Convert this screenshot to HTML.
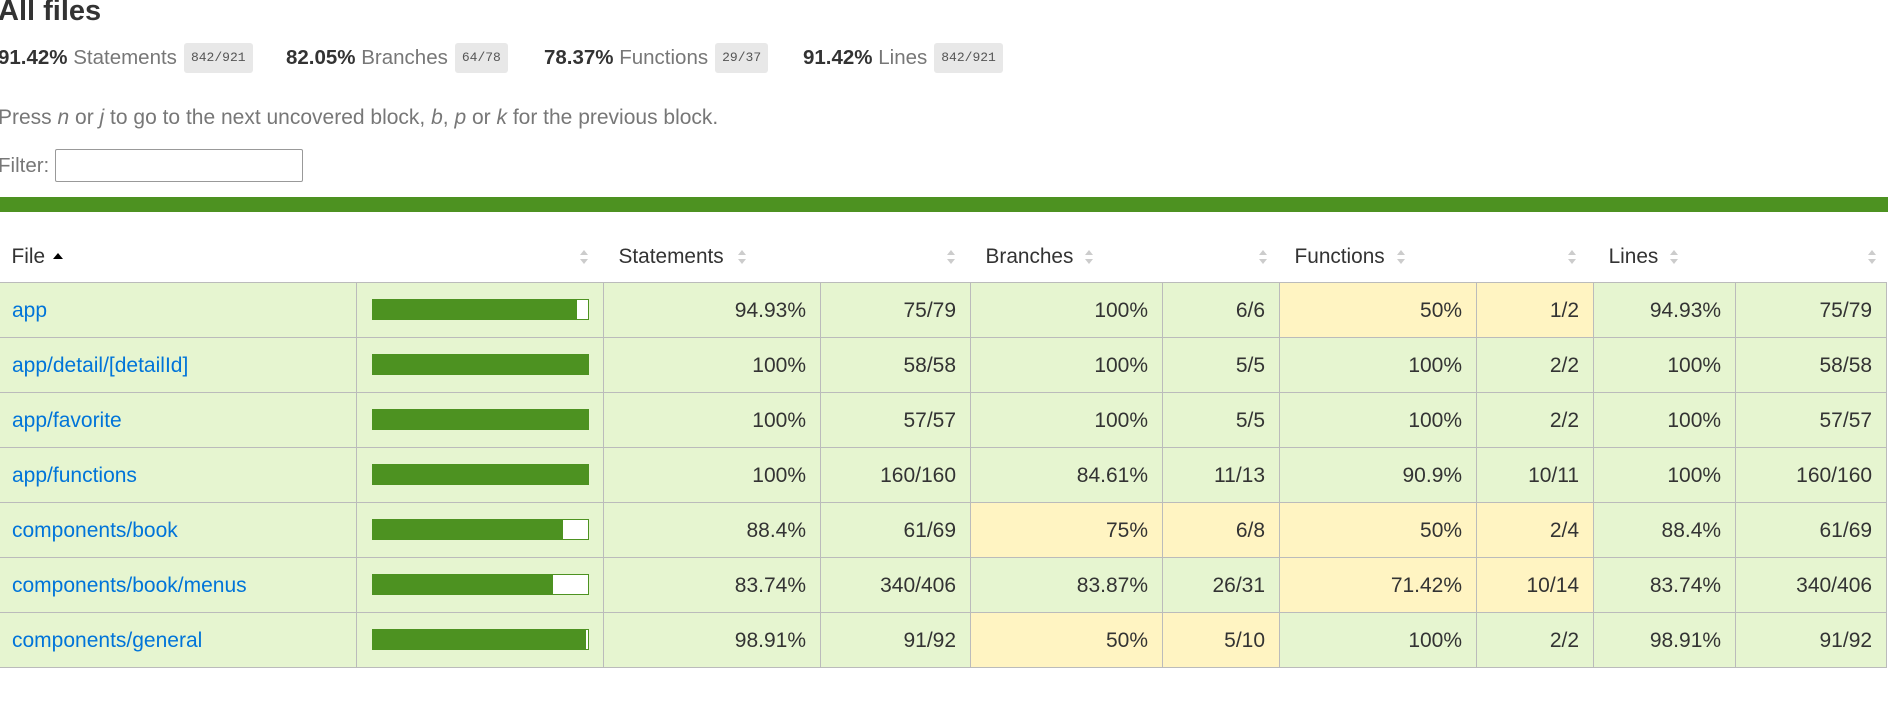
<!DOCTYPE html>
<html><head><meta charset="utf-8"><style>
*{box-sizing:border-box}
body{margin:0;width:1888px;height:704px;overflow:hidden;background:#fff;font-family:"Liberation Sans",Arial,sans-serif;font-size:20.5px;color:#333}
h1{position:absolute;left:-2px;top:-6px;margin:0;font-size:29px;font-weight:bold;line-height:34px;color:#333}
.st{position:absolute;top:43px;height:30px;line-height:30px;font-size:20.5px;white-space:nowrap}
.st b{color:#333}
.st span.q{color:#777}
.badge{display:inline-block;background:#e8e8e8;border-radius:3px;font-family:"Liberation Mono",monospace;font-size:13px;color:#555;padding:0 7px;height:30px;line-height:30px;vertical-align:top;margin-left:7px}
.press{position:absolute;left:-2px;top:106px;color:#777;font-size:21px}
.filt{position:absolute;left:-2px;top:154px;color:#777;font-size:20.5px}
.inp{position:absolute;left:55px;top:149px;width:248px;height:33px;border:1px solid #999;border-radius:2px}
.bar{position:absolute;left:0;top:197px;width:1888px;height:15px;background:#4d9221}
table{position:absolute;left:-1px;top:236px;border-collapse:collapse;table-layout:fixed;width:1887px}
th{height:46px;font-weight:normal;text-align:left;padding:0 12px 4px 15px;position:relative;color:#333;vertical-align:middle;font-size:20.8px}
th.first{padding-left:12px}
td{height:55px;border:1px solid #bbb;padding:2px 14px 0 12px;text-align:right;white-space:nowrap;font-size:21px}
td.f{text-align:left;color:#0074d9}
tr.h td{background:#e6f5d0}
td.m{background:#fff4c2!important}
.pb{width:217px;height:21px;border:1px solid #4d9221;background:#fff;margin-left:3px;position:relative;margin-top:-2px}
.pb i{position:absolute;left:0;top:0;bottom:0;background:#4d9221}
.so{position:absolute;width:8px;height:14px;top:50%;margin-top:-9px}
.so:before{content:"";position:absolute;left:0;top:0;border:4px solid transparent;border-bottom:5px solid #ccc;border-top:0}
.so:after{content:"";position:absolute;left:0;bottom:0;border:4px solid transparent;border-top:5px solid #ccc;border-bottom:0}
.up{display:inline-block;border:5px solid transparent;border-bottom:6px solid #000;border-top:0;vertical-align:middle;margin-left:8px;margin-top:-3px}
thead tr{border-bottom:1px solid #bbb}
</style></head><body>
<h1>All files</h1>
<div class="st" style="left:-2px"><b>91.42%</b> <span class="q">Statements</span><span class="badge">842/921</span></div>
<div class="st" style="left:286px"><b>82.05%</b> <span class="q">Branches</span><span class="badge">64/78</span></div>
<div class="st" style="left:544px"><b>78.37%</b> <span class="q">Functions</span><span class="badge">29/37</span></div>
<div class="st" style="left:803px"><b>91.42%</b> <span class="q">Lines</span><span class="badge">842/921</span></div>
<div class="press">Press <i>n</i> or <i>j</i> to go to the next uncovered block, <i>b</i>, <i>p</i> or <i>k</i> for the previous block.</div>
<div class="filt">Filter:</div><div class="inp"></div>
<div class="bar"></div>
<table>
<colgroup><col style="width:357px"><col style="width:247px"><col style="width:217px"><col style="width:150px"><col style="width:192px"><col style="width:117px"><col style="width:197px"><col style="width:117px"><col style="width:142px"><col style="width:151px"></colgroup>
<thead><tr>
<th colspan="2" class="first">File<span class="up"></span><span class="so" style="left:580px"></span></th>
<th colspan="2">Statements<span class="so" style="left:134px"></span><span class="so" style="left:343px"></span></th>
<th colspan="2">Branches<span class="so" style="left:114px"></span><span class="so" style="left:288px"></span></th>
<th colspan="2">Functions<span class="so" style="left:117px"></span><span class="so" style="left:288px"></span></th>
<th colspan="2">Lines<span class="so" style="left:76px"></span><span class="so" style="left:274px"></span></th>
</tr></thead>
<tbody>
<tr class="h"><td class="f">app</td><td><div class="pb"><i style="width:94.9%"></i></div></td><td>94.93%</td><td>75/79</td><td>100%</td><td>6/6</td><td class="m">50%</td><td class="m">1/2</td><td>94.93%</td><td>75/79</td></tr>
<tr class="h"><td class="f">app/detail/[detailId]</td><td><div class="pb"><i style="width:100%"></i></div></td><td>100%</td><td>58/58</td><td>100%</td><td>5/5</td><td>100%</td><td>2/2</td><td>100%</td><td>58/58</td></tr>
<tr class="h"><td class="f">app/favorite</td><td><div class="pb"><i style="width:100%"></i></div></td><td>100%</td><td>57/57</td><td>100%</td><td>5/5</td><td>100%</td><td>2/2</td><td>100%</td><td>57/57</td></tr>
<tr class="h"><td class="f">app/functions</td><td><div class="pb"><i style="width:100%"></i></div></td><td>100%</td><td>160/160</td><td>84.61%</td><td>11/13</td><td>90.9%</td><td>10/11</td><td>100%</td><td>160/160</td></tr>
<tr class="h"><td class="f">components/book</td><td><div class="pb"><i style="width:88.4%"></i></div></td><td>88.4%</td><td>61/69</td><td class="m">75%</td><td class="m">6/8</td><td class="m">50%</td><td class="m">2/4</td><td>88.4%</td><td>61/69</td></tr>
<tr class="h"><td class="f">components/book/menus</td><td><div class="pb"><i style="width:83.7%"></i></div></td><td>83.74%</td><td>340/406</td><td>83.87%</td><td>26/31</td><td class="m">71.42%</td><td class="m">10/14</td><td>83.74%</td><td>340/406</td></tr>
<tr class="h"><td class="f">components/general</td><td><div class="pb"><i style="width:98.9%"></i></div></td><td>98.91%</td><td>91/92</td><td class="m">50%</td><td class="m">5/10</td><td>100%</td><td>2/2</td><td>98.91%</td><td>91/92</td></tr>
</tbody></table>
</body></html>
